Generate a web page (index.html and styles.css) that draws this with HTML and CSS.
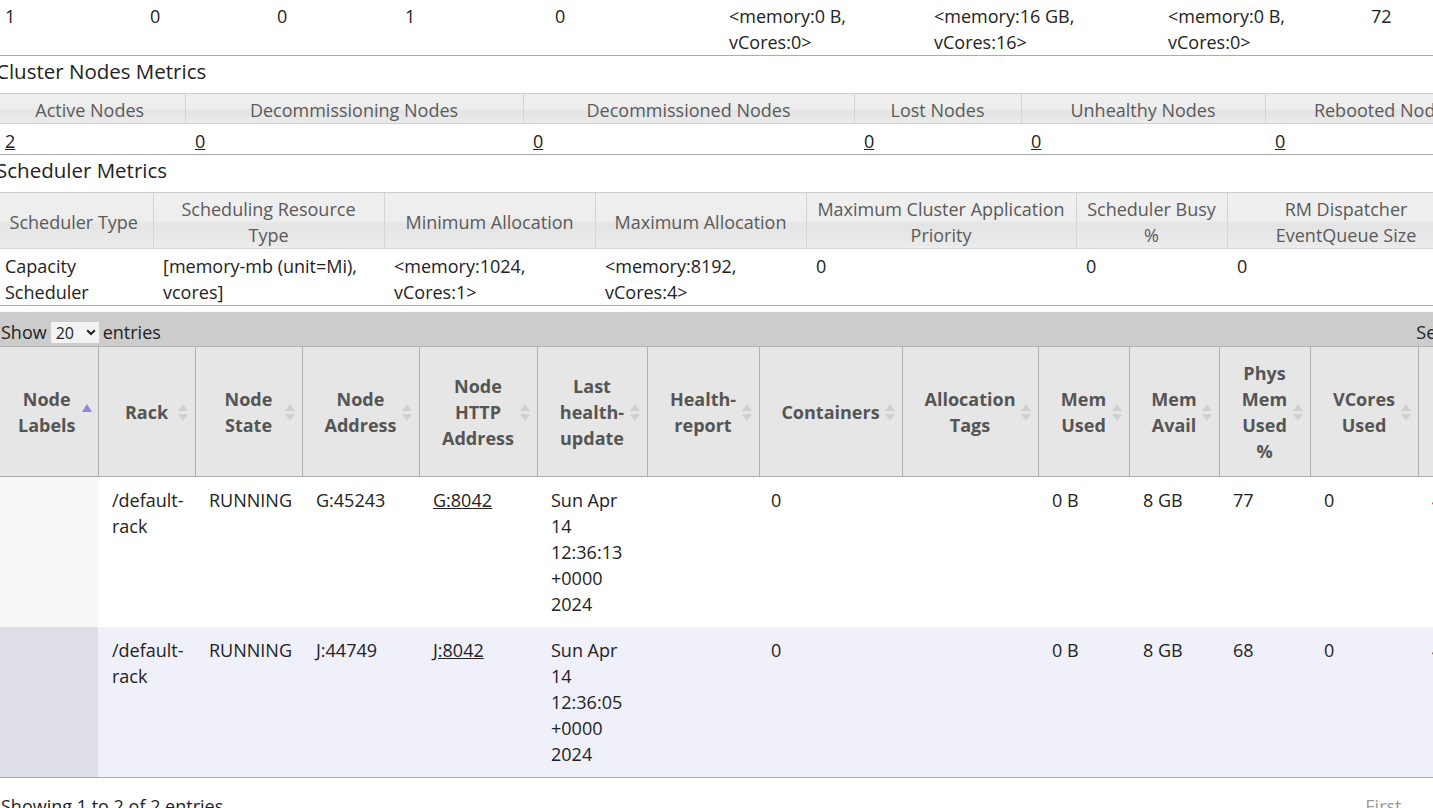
FILE: index.html
```html
<!DOCTYPE html>
<html lang="en">
<head>
<meta charset="utf-8">
<title>Nodes of the cluster</title>
<link rel="stylesheet" href="styles.css">
</head>
<body>
<div class="page">
  <table class="metrics metrics-top">
    <colgroup>
      <col class="c145"><col class="c127"><col class="c128"><col class="c150"><col class="c174"><col class="c205"><col class="c234"><col class="c203"><col class="c156">
    </colgroup>
    <tbody>
      <tr>
        <td>1</td><td>0</td><td>0</td><td>1</td><td>0</td>
        <td>&lt;memory:0 B, vCores:0&gt;</td>
        <td>&lt;memory:16 GB, vCores:16&gt;</td>
        <td>&lt;memory:0 B, vCores:0&gt;</td>
        <td>72</td>
      </tr>
    </tbody>
  </table>

  <h3 class="section-title">Cluster Nodes Metrics</h3>
  <table class="metrics metrics-wide">
    <colgroup>
      <col class="c190"><col class="c338"><col class="c331"><col class="c167"><col class="c244"><col class="c238"><col class="c200">
    </colgroup>
    <thead>
      <tr>
        <th>Active Nodes</th><th>Decommissioning Nodes</th><th>Decommissioned Nodes</th><th>Lost Nodes</th><th>Unhealthy Nodes</th><th>Rebooted Nodes</th><th>Shutdown Nodes</th>
      </tr>
    </thead>
    <tbody>
      <tr>
        <td><a href="#">2</a></td><td><a href="#">0</a></td><td><a href="#">0</a></td><td><a href="#">0</a></td><td><a href="#">0</a></td><td><a href="#">0</a></td><td><a href="#">0</a></td>
      </tr>
    </tbody>
  </table>

  <h3 class="section-title">Scheduler Metrics</h3>
  <table class="metrics metrics-wide">
    <colgroup>
      <col class="c158"><col class="c231"><col class="c211"><col class="c211"><col class="c270"><col class="c151"><col class="c238"><col class="c238">
    </colgroup>
    <thead>
      <tr>
        <th>Scheduler Type</th><th>Scheduling Resource Type</th><th>Minimum Allocation</th><th>Maximum Allocation</th><th>Maximum Cluster Application Priority</th><th>Scheduler Busy %</th><th>RM Dispatcher EventQueue Size</th><th>Scheduler Dispatcher EventQueue Size</th>
      </tr>
    </thead>
    <tbody>
      <tr>
        <td>Capacity Scheduler</td><td>[memory-mb (unit=Mi), vcores]</td><td>&lt;memory:1024, vCores:1&gt;</td><td>&lt;memory:8192, vCores:4&gt;</td><td>0</td><td>0</td><td>0</td><td>0</td>
      </tr>
    </tbody>
  </table>

  <div class="dt-wrapper">
    <div class="dt-toolbar">
      <label class="dt-length">Show
        <span class="select-wrap">
          <select><option>20</option><option>40</option><option>60</option><option>80</option><option>100</option></select>
          <svg class="chev" width="10" height="7" viewBox="0 0 10 7"><polyline points="1.2,1.2 5,5 8.8,1.2" fill="none" stroke="#222" stroke-width="2"/></svg>
        </span>
        entries</label>
      <label class="dt-filter">Search: <input type="text"></label>
    </div>

    <table class="nodes">
      <colgroup>
        <col class="n102"><col class="n97"><col class="n107"><col class="n117"><col class="n118"><col class="n110"><col class="n112"><col class="n143"><col class="n136"><col class="n91"><col class="n90"><col class="n91"><col class="n108"><col class="n112"><col class="n170">
      </colgroup>
      <thead>
        <tr>
          <th class="sorting-asc">Node Labels</th>
          <th class="sorting">Rack</th>
          <th class="sorting">Node State</th>
          <th class="sorting">Node Address</th>
          <th class="sorting">Node HTTP Address</th>
          <th class="sorting">Last health-update</th>
          <th class="sorting">Health-report</th>
          <th class="sorting">Containers</th>
          <th class="sorting">Allocation Tags</th>
          <th class="sorting">Mem Used</th>
          <th class="sorting">Mem Avail</th>
          <th class="sorting">Phys Mem Used %</th>
          <th class="sorting">VCores Used</th>
          <th class="sorting">VCores Avail</th>
          <th class="sorting">Version</th>
        </tr>
      </thead>
      <tbody>
        <tr class="odd">
          <td class="sorting-1"></td>
          <td>/default-rack</td>
          <td>RUNNING</td>
          <td>G:45243</td>
          <td><a href="#">G:8042</a></td>
          <td>Sun Apr 14 12:36:13 +0000 2024</td>
          <td></td>
          <td class="cell-containers">0</td>
          <td></td>
          <td>0 B</td>
          <td>8 GB</td>
          <td>77</td>
          <td class="cell-vcores">0</td>
          <td>4</td>
          <td>3.3.6</td>
        </tr>
        <tr class="even">
          <td class="sorting-1"></td>
          <td>/default-rack</td>
          <td>RUNNING</td>
          <td>J:44749</td>
          <td><a href="#">J:8042</a></td>
          <td>Sun Apr 14 12:36:05 +0000 2024</td>
          <td></td>
          <td class="cell-containers">0</td>
          <td></td>
          <td>0 B</td>
          <td>8 GB</td>
          <td>68</td>
          <td class="cell-vcores">0</td>
          <td>4</td>
          <td>3.3.6</td>
        </tr>
      </tbody>
    </table>

    <div class="dt-footer">
      <div class="dt-info">Showing 1 to 2 of 2 entries</div>
      <div class="dt-paginate">
        <span class="pg-btn disabled">First</span>
        <span class="pg-btn disabled">Previous</span>
        <span class="pg-btn current">1</span>
        <span class="pg-btn disabled">Next</span>
        <span class="pg-btn disabled">Last</span>
      </div>
    </div>
  </div>
</div>
</body>
</html>
```

FILE: styles.css
```css
html, body {
  margin: 0;
  padding: 0;
  overflow: hidden;
  background: #fff;
}

body {
  font-family: "Open Sans", "Liberation Sans", sans-serif;
  font-size: 18px;
  line-height: 26px;
  color: #222;
}

a {
  color: #222;
  text-decoration: underline;
}

.page {
  width: 1760px;
  margin-left: -5px;
}

/* ---------- metric tables ---------- */
.metrics {
  border-collapse: collapse;
  table-layout: fixed;
}

.metrics-top {
  width: 1522px;
}

.metrics-wide {
  width: 1708px;
}

.metrics th {
  font-weight: normal;
  color: #5a5a5a;
  padding: 3px 10px 0;
  text-align: center;
  vertical-align: middle;
  border-top: 1px solid #cfcfcf;
  border-bottom: 1px solid #d4d4d4;
  border-left: 1px solid #d4d4d4;
  background: linear-gradient(#f0f0f0 0%, #ededed 48%, #e4e4e4 56%, #ebebeb 100%);
}

.metrics th:first-child {
  border-left: none;
}

.metrics td {
  padding: 4px 9px 0 10px;
  text-align: left;
  vertical-align: top;
  border-bottom: 1px solid #ababab;
}

.metrics-top td {
  padding-top: 3px;
}

.c145 { width: 145px; } .c127 { width: 127px; } .c128 { width: 128px; }
.c150 { width: 150px; } .c174 { width: 174px; } .c205 { width: 205px; }
.c234 { width: 234px; } .c203 { width: 203px; } .c156 { width: 156px; }
.c190 { width: 190px; } .c338 { width: 338px; } .c331 { width: 331px; }
.c167 { width: 167px; } .c244 { width: 244px; } .c238 { width: 238px; }
.c200 { width: 200px; } .c158 { width: 158px; } .c231 { width: 231px; }
.c211 { width: 211px; } .c270 { width: 270px; } .c151 { width: 151px; }

.section-title {
  font-size: 20.5px;
  font-weight: normal;
  line-height: 28px;
  margin: 1px 0 8px 1px;
  color: #222;
}

/* ---------- datatable ---------- */
.dt-wrapper {
  width: 1704px;
  margin: 6px 0 0 1px;
}

.dt-toolbar {
  display: flex;
  justify-content: space-between;
  align-items: center;
  height: 34px;
  box-sizing: border-box;
  padding: 7px 6px 1px 5px;
  background: #cccccc;
}

.dt-length,
.dt-filter {
  display: flex;
  align-items: center;
  gap: 4px;
}

.select-wrap {
  position: relative;
  display: inline-block;
  height: 21px;
}

.select-wrap select {
  appearance: none;
  -webkit-appearance: none;
  width: 48px;
  height: 21px;
  border: none;
  border-radius: 0;
  background: #f3f3f3;
  color: #222;
  font-family: "Open Sans", "Liberation Sans", sans-serif;
  font-size: 16px;
  padding: 0 0 0 5px;
  margin: 0;
  display: block;
}

.chev {
  position: absolute;
  right: 3px;
  top: 7px;
  pointer-events: none;
}

.dt-filter input {
  width: 212px;
  height: 21px;
  border: none;
  background: #fff;
  padding: 0;
}

.nodes {
  width: 1704px;
  border-collapse: collapse;
  table-layout: fixed;
}

.n102 { width: 102px; } .n97 { width: 97px; } .n107 { width: 107px; }
.n117 { width: 117px; } .n118 { width: 118px; } .n110 { width: 110px; }
.n112 { width: 112px; } .n143 { width: 143px; } .n136 { width: 136px; }
.n91 { width: 91px; } .n90 { width: 90px; } .n108 { width: 108px; }
.n170 { width: 170px; }

.nodes th {
  position: relative;
  background: #e6e6e6;
  color: #555;
  font-weight: bold;
  text-align: center;
  vertical-align: middle;
  padding: 13px 18px 12px;
  border-top: 1px solid #b4b4b4;
  border-bottom: 1px solid #ababab;
  border-left: 1px solid #b0b0b0;
}

.nodes th:first-child {
  border-left: none;
}

.nodes th.sorting::before,
.nodes th.sorting::after,
.nodes th.sorting-asc::before {
  content: "";
  position: absolute;
  right: 7px;
  width: 0;
  height: 0;
  border-left: 5px solid transparent;
  border-right: 5px solid transparent;
}

.nodes th.sorting::before {
  top: calc(50% - 8px);
  border-bottom: 7px solid #d0d0d0;
}

.nodes th.sorting::after {
  top: calc(50% + 2px);
  border-top: 7px solid #d0d0d0;
}

.nodes th.sorting-asc::before {
  right: 6px;
  top: calc(50% - 8px);
  border-left-width: 5.5px;
  border-right-width: 5.5px;
  border-bottom: 8px solid #8a8ade;
}

.nodes td {
  padding: 10px 12px 10px 14px;
  text-align: left;
  vertical-align: top;
}

.nodes td.cell-containers {
  padding-left: 12px;
}

.nodes td.cell-vcores {
  padding-left: 14px;
}

.nodes tr.odd td { background: #ffffff; }
.nodes tr.odd td.sorting-1 { background: #f7f7f7; }
.nodes tr.even td { background: #f0f0fb; }
.nodes tr.even td.sorting-1 { background: #dedee9; }

.nodes tbody tr:last-child td {
  border-bottom: 1px solid #ababab;
}

.dt-footer {
  display: flex;
  justify-content: space-between;
  padding: 15px 6px 0 5px;
}

.dt-paginate {
  display: flex;
  gap: 16px;
}

.pg-btn {
  padding: 0 8px;
}

.pg-btn.disabled {
  color: #9a9a9a;
}
```
